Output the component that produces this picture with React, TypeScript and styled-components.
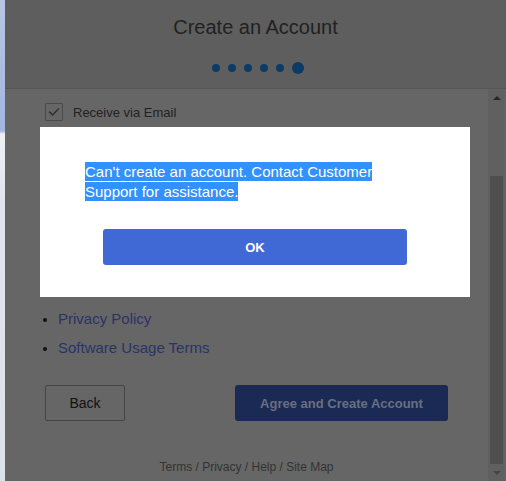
import React from 'react';
import styled, { createGlobalStyle } from 'styled-components';

// Colours below are the ones seen through the dark modal backdrop.
const GlobalStyle = createGlobalStyle`
  html, body, #root {
    margin: 0;
    height: 100%;
  }
  body {
    overflow: hidden;
    font-family: "Liberation Sans", Arial, sans-serif;
    background: #666666;
  }
  * {
    box-sizing: border-box;
  }
`;

const steps = [false, false, false, false, false, true];
const links = ['Privacy Policy', 'Software Usage Terms'];

export default function App() {
  return (
    <>
      <GlobalStyle />
      <Page>
        <SideStrip />
        <Panel>
          <Header>
            <Title>Create an Account</Title>
            <Steps>
              {steps.map((current, i) => (
                <Dot key={i} $current={current} />
              ))}
            </Steps>
          </Header>
          <Body>
            <Content>
              <CheckRow>
                <CheckBox>
                  <svg width="12" height="10" viewBox="0 0 12 10">
                    <path d="M1.2 4.6 L4.6 8 L10.8 1.6" fill="none" stroke="#303030" strokeWidth="1.5" />
                  </svg>
                </CheckBox>
                <CheckLabel>Receive via Email</CheckLabel>
              </CheckRow>
              <TermsBox />
              <TermsList>
                {links.map((t) => (
                  <TermItem key={t}>
                    <TermLink href="#">{t}</TermLink>
                  </TermItem>
                ))}
              </TermsList>
              <Actions>
                <BackButton type="button">Back</BackButton>
                <PrimaryButton type="button" $width={213} $dimmed>
                  Agree and Create Account
                </PrimaryButton>
              </Actions>
              <Footer>Terms / Privacy / Help / Site Map</Footer>
            </Content>
            <Scrollbar>
              <Arrow $up />
              <Track>
                <Thumb />
              </Track>
              <Arrow />
            </Scrollbar>
          </Body>
          <Backdrop>
            <Dialog>
              <Message>
                <Selected>Can't create an account. Contact Customer Support for assistance.</Selected>
              </Message>
              <PrimaryButton type="button" $width={304}>
                OK
              </PrimaryButton>
            </Dialog>
          </Backdrop>
        </Panel>
      </Page>
    </>
  );
}

const Page = styled.div`
  display: flex;
  height: 481px;
  width: 506px;
`;

const SideStrip = styled.div`
  width: 5px;
  flex-shrink: 0;
  background: linear-gradient(
    to bottom,
    #b8c6e2 0px,
    #a2b6e0 131px,
    #eef0f4 134px,
    #e2e5ec 200px,
    #dde1ea 100%
  );
`;

const Panel = styled.div`
  position: relative;
  flex: 1;
  display: flex;
  flex-direction: column;
  background: #666666;
  overflow: hidden;
`;

const Header = styled.div`
  height: 89px;
  flex-shrink: 0;
  display: flex;
  flex-direction: column;
  align-items: center;
  padding-top: 16px;
  background: #5e5e5e;
  border-bottom: 1px solid #565656;
`;

const Title = styled.h1`
  margin: 0;
  font-size: 20px;
  line-height: 22px;
  font-weight: normal;
  color: #222222;
`;

const Steps = styled.div`
  display: flex;
  align-items: center;
  gap: 8px;
  height: 12px;
  margin-top: 24px;
  margin-left: 4px;
`;

const Dot = styled.span<{ $current: boolean }>`
  width: ${(p) => (p.$current ? 12 : 8)}px;
  height: ${(p) => (p.$current ? 12 : 8)}px;
  border-radius: 50%;
  background: #0c3b66;
`;

const Body = styled.div`
  flex: 1;
  display: flex;
  min-height: 0;
`;

const Content = styled.div`
  flex: 1;
  display: flex;
  flex-direction: column;
  padding: 14px 40px 0 40px;
`;

const CheckRow = styled.label`
  display: flex;
  align-items: center;
  height: 18px;
`;

const CheckBox = styled.span`
  width: 18px;
  height: 18px;
  border: 1px solid #4a4a4a;
  border-radius: 1px;
  display: flex;
  align-items: center;
  justify-content: center;
`;

const CheckLabel = styled.span`
  margin-left: 10px;
  font-size: 13px;
  color: #222222;
`;

/* agreement text area, fully covered by the dialog */
const TermsBox = styled.div`
  margin-top: 12px;
  height: 145px;
  border: 1px solid #4a4a4a;
`;

const TermsList = styled.ul`
  margin: 26px 0 0 0;
  padding: 0 0 0 13px;
`;

const TermItem = styled.li`
  height: 29px;
  line-height: 29px;
  font-size: 15px;
  color: #111111;
  &::marker {
    font-size: 13px;
  }
`;

const TermLink = styled.a`
  color: #2a3366;
  text-decoration: none;
`;

const Actions = styled.div`
  display: flex;
  justify-content: space-between;
  margin-top: 23px;
`;

const BackButton = styled.button`
  width: 80px;
  height: 36px;
  border: 1px solid #444444;
  border-radius: 2px;
  background: transparent;
  font-family: inherit;
  font-size: 14px;
  color: #111111;
`;

const PrimaryButton = styled.button<{ $width: number; $dimmed?: boolean }>`
  width: ${(p) => p.$width}px;
  height: 36px;
  border: none;
  border-radius: 3px;
  background: ${(p) => (p.$dimmed ? '#1a2a55' : '#4169d6')};
  color: ${(p) => (p.$dimmed ? '#6a6f80' : '#ffffff')};
  font-family: inherit;
  font-size: 13px;
  font-weight: bold;
`;

const Footer = styled.div`
  margin-top: 39px;
  text-align: center;
  font-size: 12px;
  line-height: 14px;
  color: #333333;
`;

const Scrollbar = styled.div`
  width: 17px;
  margin-right: 1px;
  display: flex;
  flex-direction: column;
  background: #606060;
`;

const Arrow = styled.div<{ $up?: boolean }>`
  height: 17px;
  display: flex;
  align-items: center;
  justify-content: center;
  &::before {
    content: '';
    border-left: 4px solid transparent;
    border-right: 4px solid transparent;
    ${(p) => (p.$up ? 'border-bottom: 4px solid #262626;' : 'border-top: 4px solid #444444;')}
  }
`;

const Track = styled.div`
  flex: 1;
  display: flex;
  flex-direction: column;
  padding: 70px 2px 0 2px;
`;

const Thumb = styled.div`
  flex: 1;
  background: #4f4f4f;
`;

const Backdrop = styled.div`
  position: absolute;
  inset: 0;
  display: flex;
  flex-direction: column;
  align-items: center;
  padding: 127px 1px 0 0;
`;

const Dialog = styled.div`
  width: 430px;
  height: 170px;
  background: #ffffff;
  padding: 35px 45px 0 45px;
  display: flex;
  flex-direction: column;
  align-items: center;
`;

const Message = styled.p`
  align-self: stretch;
  margin: 0 0 27px 0;
  font-size: 15px;
  line-height: 20px;
  color: #ffffff;
`;

const Selected = styled.span`
  background: #3390ff;
  padding: 1px 0;
  box-decoration-break: clone;
  -webkit-box-decoration-break: clone;
`;
